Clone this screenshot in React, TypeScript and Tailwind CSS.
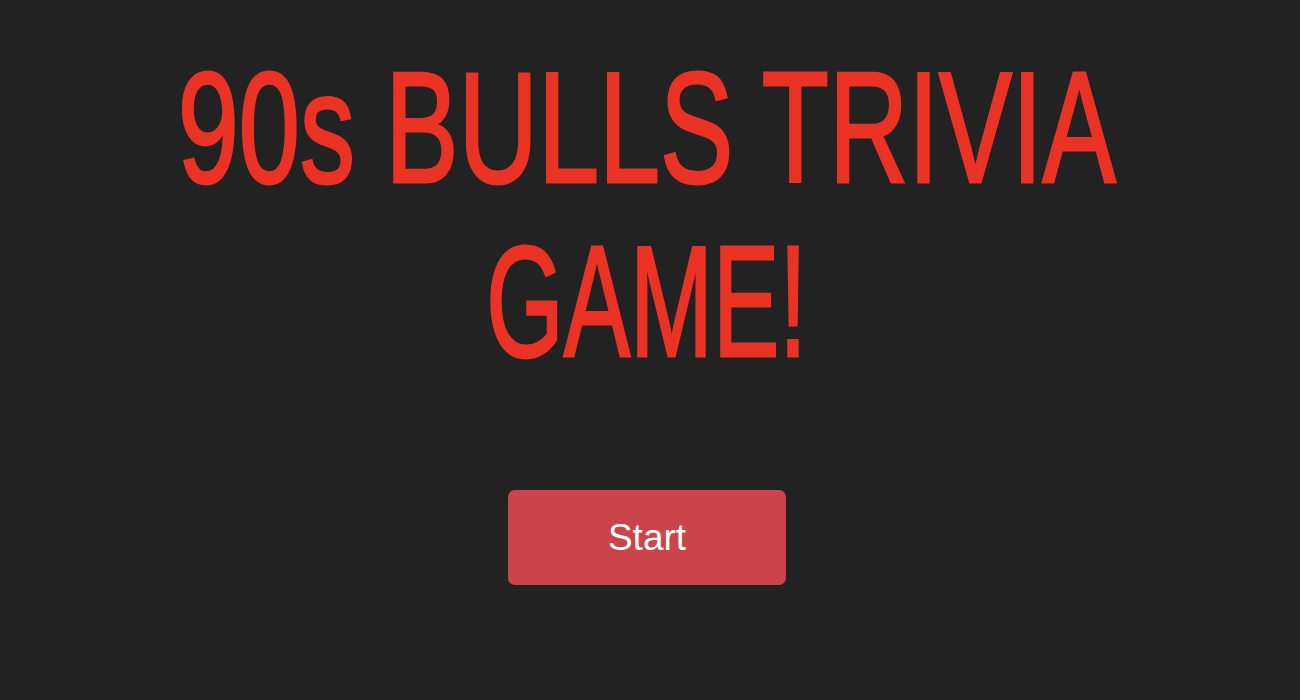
import React from 'react';

// each line gets its own horizontal squeeze so the widths match the condensed display face
const titleLines = [
    { text: '90s BULLS TRIVIA', squeeze: 'scale-x-[0.695]' },
    { text: 'GAME!', squeeze: 'scale-x-[0.63]' },
];

export default function App() {
    return (
        <div className="min-h-[700px] w-full bg-[#222222] flex flex-col items-center pt-[40px] pr-[6px] overflow-hidden">
            <h1 className="w-full text-[#ea3324] font-['Liberation_Sans',Arial,sans-serif] font-normal text-[158px] leading-[174px] [-webkit-text-stroke:3px_#ea3324]">
                {titleLines.map(line => (
                    <div key={line.text} className="flex justify-center">
                        <span className={`inline-block whitespace-nowrap origin-center ${line.squeeze}`}>{line.text}</span>
                    </div>
                ))}
            </h1>

            <button className="mt-[102px] w-[278px] h-[95px] rounded-[7px] bg-[#cb444b] text-white text-[37px] font-['Liberation_Sans',Arial,sans-serif] flex items-center justify-center">
                Start
            </button>
        </div>
    );
}
